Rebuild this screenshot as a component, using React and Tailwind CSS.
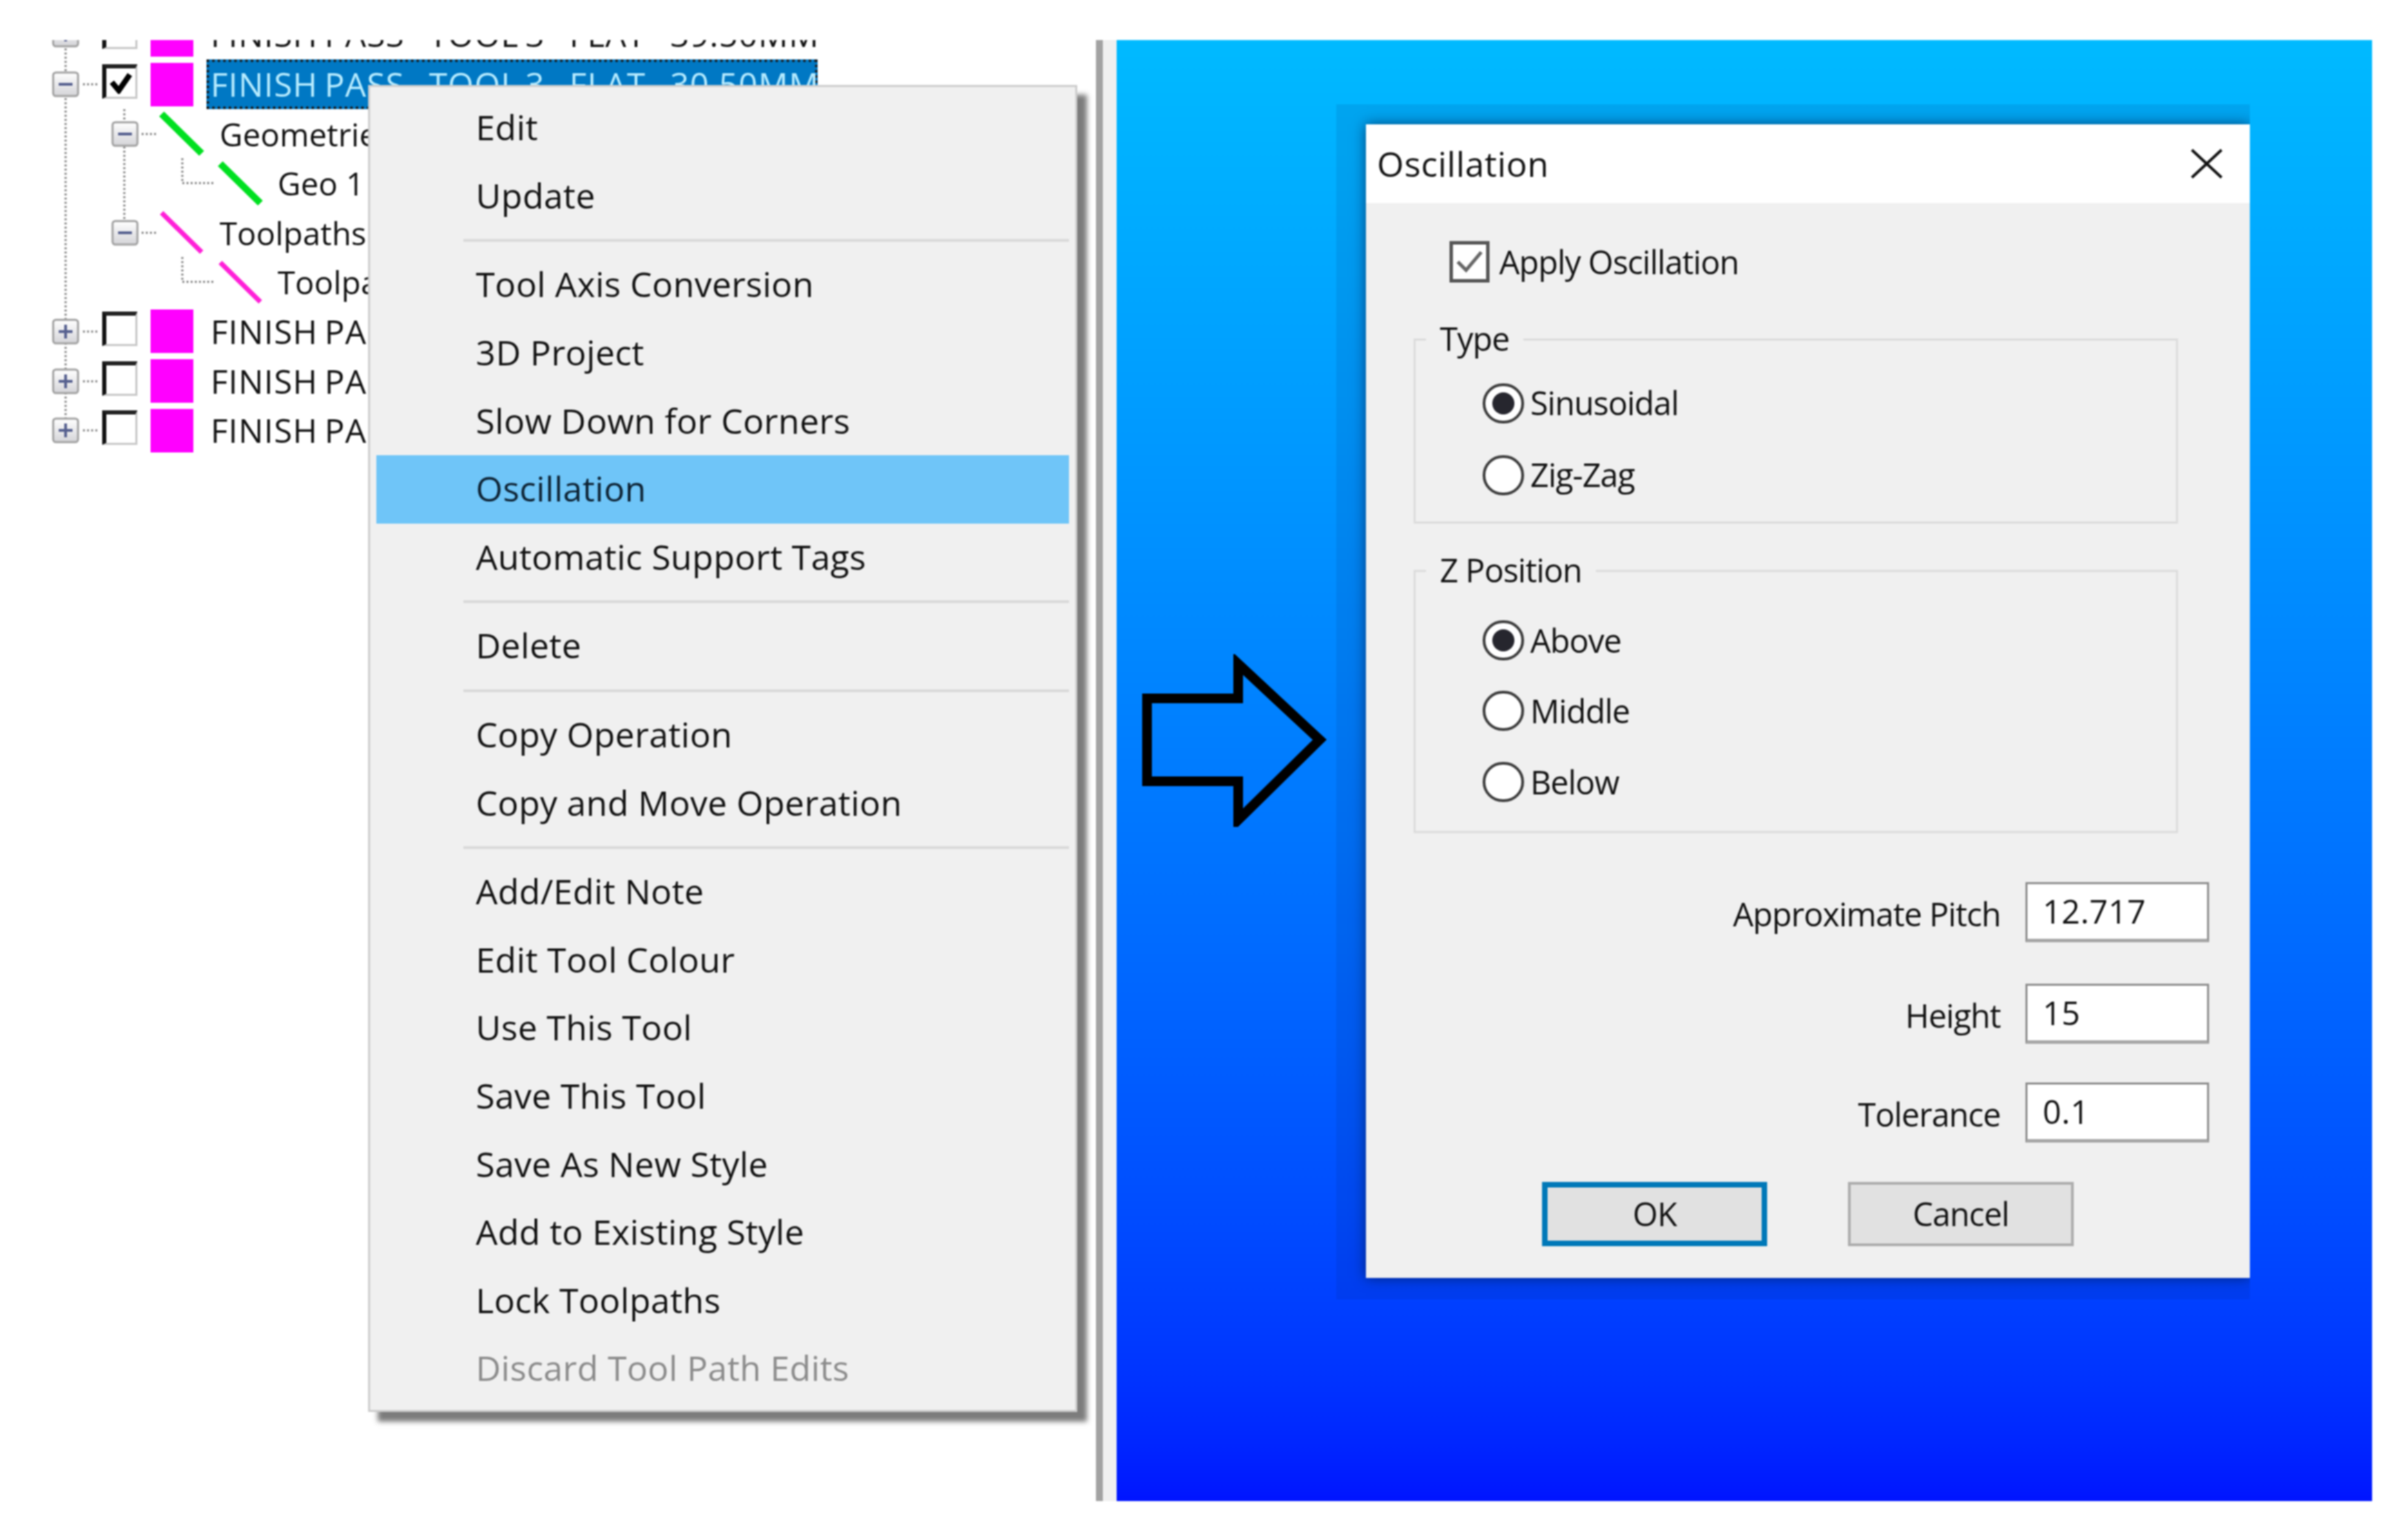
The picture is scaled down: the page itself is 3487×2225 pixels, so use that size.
import React from 'react';

const Expander = ({ open }) => (
  <svg width="40" height="38" viewBox="0 0 40 38" className="shrink-0">
    <defs>
      <linearGradient id="expander-fill" x1="0" y1="0" x2="0" y2="1">
        <stop offset="0" stopColor="#ffffff" />
        <stop offset="1" stopColor="#d4d4d8" />
      </linearGradient>
    </defs>
    <rect x="2" y="2" width="36" height="34" rx="4" fill="url(#expander-fill)" stroke="#a3a3a3" strokeWidth="3" />
    <line x1="10" y1="19" x2="30" y2="19" stroke="#56608f" strokeWidth="4" />
    {!open && <line x1="20" y1="9" x2="20" y2="29" stroke="#56608f" strokeWidth="4" />}
  </svg>
);

const TreeCheck = ({ checked }) => (
  <div className="w-[51px] h-[50px] mb-[8px] shrink-0 bg-white border-t-[6px] border-l-[6px] border-r-[3px] border-b-[3px] border-t-[#222] border-l-[#111] border-r-[#c8c8c8] border-b-[#c8c8c8] flex items-center justify-center">
    {checked && (
      <svg width="34" height="32" viewBox="0 0 34 32">
        <path d="M4 15 L14 27 L30 4" fill="none" stroke="#000" strokeWidth="8" />
      </svg>
    )}
  </div>
);

const Slash = ({ color, width }) => (
  <svg width="58" height="59" viewBox="0 0 58 59" className="shrink-0 overflow-visible">
    <line x1="0" y1="1" x2="58" y2="58" stroke={color} strokeWidth={width} />
  </svg>
);

const OperationRow = ({ open, checked, selected, label }) => (
  <div className="h-[71.6px] flex items-center pl-[75px] tracking-[1px] [word-spacing:-4px]">
    <Expander open={open} />
    <div className="w-[33px] shrink-0" />
    <TreeCheck checked={checked} />
    <div className="w-[62px] h-[63px] ml-[19px] shrink-0 bg-[#ff00ff]" />
    <div
      className={
        selected
          ? 'ml-[19px] w-[885px] h-[72px] shrink-0 flex items-center pl-[2px] whitespace-nowrap bg-[#0078c4] border-[4px] border-dotted border-[#1a1a1a] text-[#b8ecff]'
          : 'ml-[19px] h-[72px] shrink-0 flex items-center pl-[6px] whitespace-nowrap'
      }
    >
      {label}
    </div>
  </div>
);

const GroupRow = ({ color, width, label }) => (
  <div className="h-[71.6px] flex items-center pl-[161px] text-[46px]">
    <Expander open />
    <div className="w-[33px] shrink-0" />
    <Slash color={color} width={width} />
    <div className="ml-[26px] whitespace-nowrap">{label}</div>
  </div>
);

const LeafRow = ({ color, width, label }) => (
  <div className="h-[71.6px] flex items-center pl-[319px] text-[46px]">
    <Slash color={color} width={width} />
    <div className="ml-[25px] whitespace-nowrap">{label}</div>
  </div>
);

// dotted guides of the tree, drawn behind the rows
const TreeGuides = () => (
  <svg width="340" height="580" viewBox="0 0 340 580" className="absolute left-0 top-0">
    <g stroke="#8a8a8a" strokeWidth="3" strokeDasharray="3 3" fill="none">
      <path d="M95 0 V566" />
      <path d="M180 100 V262" />
      <path d="M120 64 H142 M120 422 H142 M120 494 H142 M120 565 H142" />
      <path d="M205 136 H227 M205 279 H227" />
      <path d="M264 171 V207 H311" />
      <path d="M264 314 V350 H311" />
    </g>
  </svg>
);

const menuSections = [
  ['Edit', 'Update'],
  ['Tool Axis Conversion', '3D Project', 'Slow Down for Corners', 'Oscillation', 'Automatic Support Tags'],
  ['Delete'],
  ['Copy Operation', 'Copy and Move Operation'],
  ['Add/Edit Note', 'Edit Tool Colour', 'Use This Tool', 'Save This Tool', 'Save As New Style', 'Add to Existing Style', 'Lock Toolpaths', 'Discard Tool Path Edits'],
];

const ContextMenu = () => (
  <div className="absolute left-[533px] top-[65px] w-[1027px] h-[1921px] bg-[#f0f0f0] border-[3px] border-[#cdcdcd] px-[9px] py-[10px] shadow-[14px_14px_7px_rgba(80,80,80,0.75)] text-[50px] tracking-[0.3px] [word-spacing:0px] text-[#111]">
    {menuSections.map((section, i) => (
      <div key={i}>
        {i > 0 && (
          <div className="h-[30px] flex items-center pl-[126px]">
            <div className="w-full h-[4px] bg-[#d9d9d9]" />
          </div>
        )}
        {section.map((item) => (
          <div
            key={item}
            className={
              'h-[98.6px] flex items-center pl-[144px] pb-[2px] whitespace-nowrap ' +
              (item === 'Oscillation' ? 'bg-[#6fc5f8] text-[#0d2233] ' : '') +
              (item === 'Discard Tool Path Edits' ? 'text-[#8b8b8b]' : '')
            }
          >
            {item}
          </div>
        ))}
      </div>
    ))}
  </div>
);

const Radio = ({ checked, label, rowHeight }) => (
  <div className={'flex items-center gap-[9px] ' + rowHeight}>
    <div className="w-[60px] h-[58px] rounded-full bg-white border-[4px] border-[#3c3c3c] flex items-center justify-center shrink-0">
      {checked && <div className="w-[32px] h-[32px] rounded-full bg-[#26262e]" />}
    </div>
    <span>{label}</span>
  </div>
);

const Group = ({ label, height, top, children }) => (
  <div className={'relative ml-[69px] w-[1107px] border-[3px] border-[#dcdcdc] pl-[97px] ' + height + ' ' + top}>
    <span className="absolute left-[15px] -top-[30px] h-[54px] leading-[54px] px-[20px] bg-[#f0f0f0]">{label}</span>
    {children}
  </div>
);

const Field = ({ label, value, className }) => (
  <div className={'flex items-center justify-end pr-[59px] ' + className}>
    <span className="mr-[36px] pt-[6px]">{label}</span>
    <div className="w-[266px] h-[87px] bg-white border-[3px] border-[#8f8f8f] border-b-[5px] border-b-[#a6a6a6] pl-[22px] flex items-center tracking-[0.5px]">
      {value}
    </div>
  </div>
);

const Dialog = () => (
  <div className="w-[1280px] h-[1670px] bg-[#f0f0f0] shadow-[0_0_18px_rgba(0,20,60,0.65)] text-[47px] tracking-[-1px] text-[#111]">
    <div className="h-[114px] bg-white flex items-center justify-between pl-[16px] pr-[39px] text-[50px] tracking-[0.5px]">
      <span>Oscillation</span>
      <svg width="47" height="44" viewBox="0 0 47 44">
        <path d="M2 2 L45 42 M45 2 L2 42" stroke="#111" strokeWidth="4" fill="none" />
      </svg>
    </div>

    <div className="flex items-center pl-[121px] mt-[50px] gap-[14px]">
      <div className="w-[58px] h-[60px] bg-white border-[5px] border-[#555] flex items-center justify-center">
        <svg width="44" height="40" viewBox="0 0 44 40">
          <path d="M5 20 L17 32 L39 6" fill="none" stroke="#666" strokeWidth="5" />
        </svg>
      </div>
      <span>Apply Oscillation</span>
    </div>

    <Group label="Type" height="h-[268px]" top="mt-[75px] pt-[39px]">
      <Radio checked label="Sinusoidal" rowHeight="h-[104px]" />
      <Radio label="Zig-Zag" rowHeight="h-[104px]" />
    </Group>

    <Group label="Z Position" height="h-[381px]" top="mt-[67px] pt-[48px]">
      <Radio checked label="Above" rowHeight="h-[102.5px]" />
      <Radio label="Middle" rowHeight="h-[102.5px]" />
      <Radio label="Below" rowHeight="h-[102.5px]" />
    </Group>

    <Field label="Approximate Pitch" value="12.717" className="mt-[71px]" />
    <Field label="Height" value="15" className="mt-[60px]" />
    <Field label="Tolerance" value="0.1" className="mt-[56px]" />

    <div className="flex mt-[57px] pl-[255px] gap-[117px]">
      <div className="w-[326px] h-[93px] bg-[#e1e1e1] border-[8px] border-[#0078b8] flex items-center justify-center">OK</div>
      <div className="w-[327px] h-[93px] bg-[#e1e1e1] border-[4px] border-[#adadad] flex items-center justify-center">Cancel</div>
    </div>
  </div>
);

export default function App() {
  return (
    <div className="w-[3487px] h-[2225px] bg-white pt-[58px] overflow-hidden blur-[0.8px]" style={{ fontFamily: '"Open Sans", "Noto Sans", sans-serif' }}>
      <div className="flex h-[2115px]">
        {/* Operations tree + context menu */}
        <div className="relative w-[1587px] h-full overflow-hidden shrink-0 text-[48px] leading-[54px] text-[#111]">
          <TreeGuides />
          <div className="relative -mt-[43.4px]">
            <OperationRow label="FINISH PASS - TOOL 3 - FLAT - 39.50MM" />
            <OperationRow open checked selected label="FINISH PASS - TOOL 3 - FLAT - 30.50MM" />
            <GroupRow color="#00e020" width={10} label="Geometries" />
            <LeafRow color="#00e020" width={10} label="Geo 1" />
            <GroupRow color="#ff20d8" width={7} label="Toolpaths" />
            <LeafRow color="#ff20d8" width={7} label="Toolpath 1" />
            <OperationRow label="FINISH PASS - TOOL 3 - FLAT - 20.50MM" />
            <OperationRow label="FINISH PASS - TOOL 3 - FLAT - 10.50MM" />
            <OperationRow label="FINISH PASS - TOOL 3 - FLAT - 0.50MM" />
          </div>
          <ContextMenu />
        </div>

        {/* Divider */}
        <div className="w-[10px] h-full bg-[#a2a2a2] shrink-0" />
        <div className="w-[20px] h-full bg-[#f0f0f0] shrink-0" />

        {/* Blue desktop with the dialog */}
        <div className="relative w-[1818px] h-full shrink-0 bg-linear-to-b from-[#00baff] to-[#0014ff] pl-[318px] pt-[93px]">
          <svg width="274" height="250" viewBox="0 0 274 250" className="absolute left-[36px] top-[889px]">
            <path d="M8 64 H140 V14 L258 124 L140 240 V184 H8 Z" fill="none" stroke="#000" strokeWidth="14" />
          </svg>
          <div className="w-[1323px] h-[1730px] bg-[#002060]/10 pl-[43px] pt-[29px] overflow-hidden">
            <Dialog />
          </div>
        </div>
      </div>
    </div>
  );
}
